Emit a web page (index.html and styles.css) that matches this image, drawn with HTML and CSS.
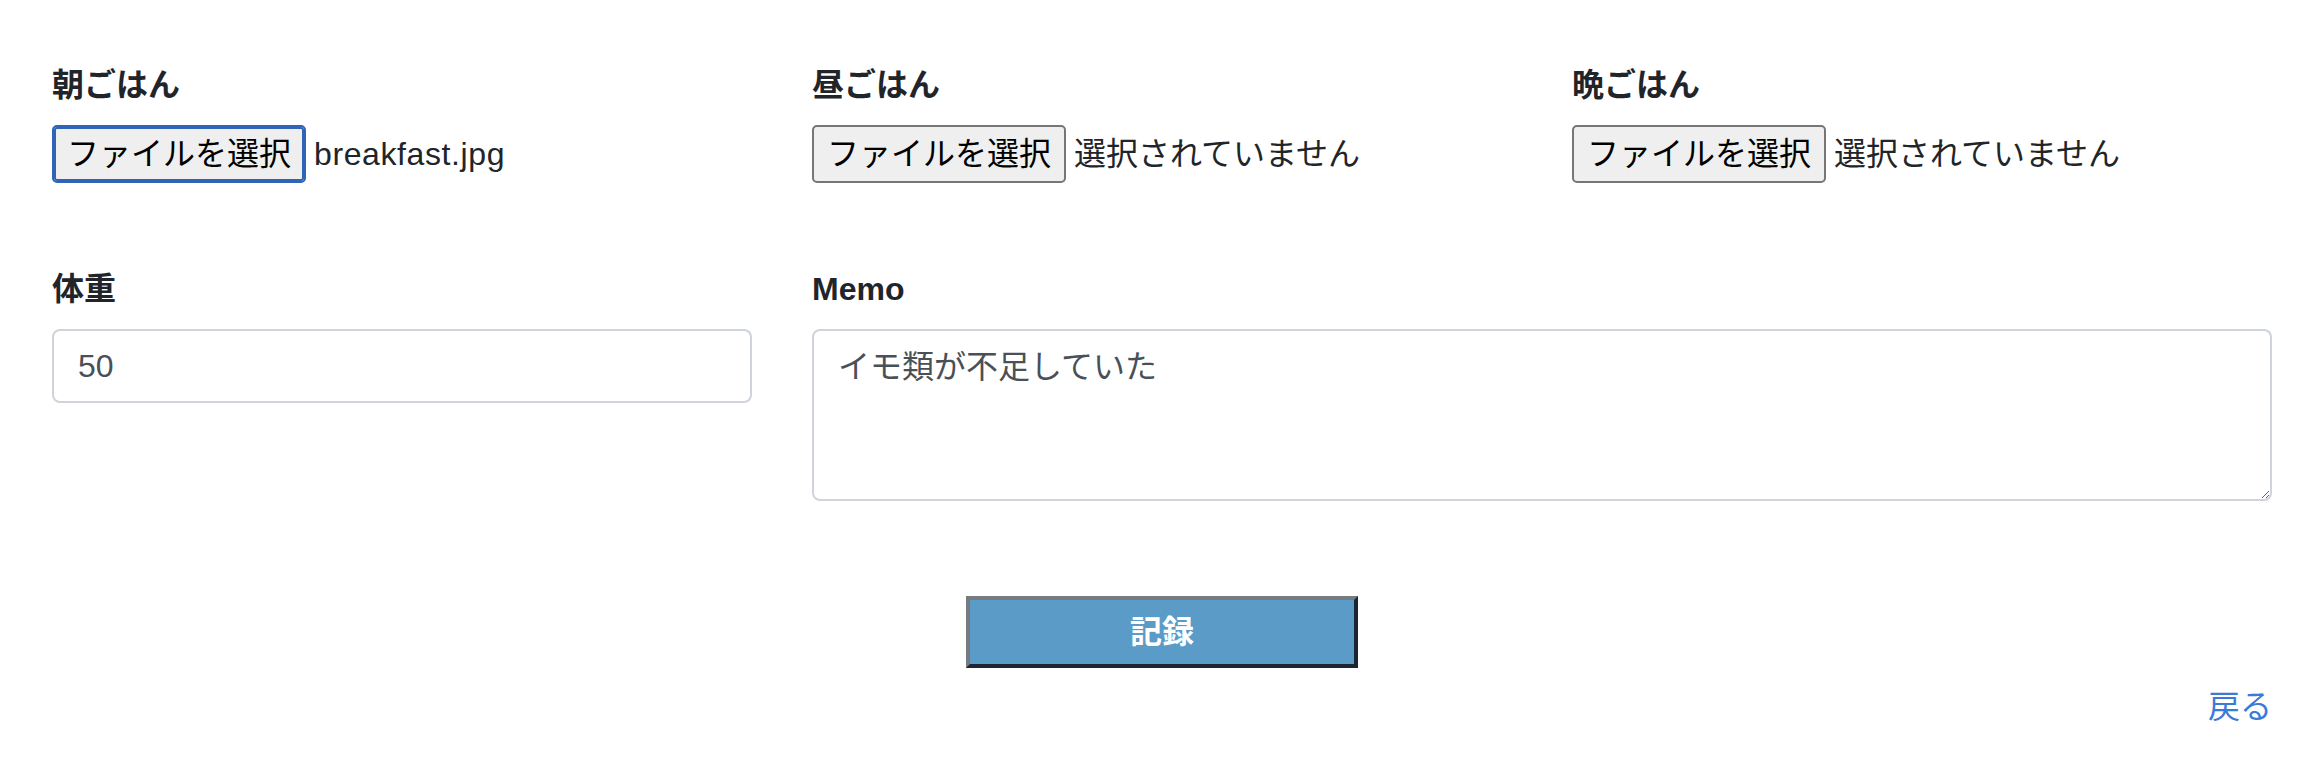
FILE: index.html
```html
<!DOCTYPE html>
<html lang="ja">
<head>
<meta charset="utf-8">
<title>記録</title>
<link rel="stylesheet" href="styles.css">
</head>
<body>
<div class="page">
  <form class="form" action="#">
    <div class="grid">
      <div class="group file-group">
        <label class="label">朝ごはん</label>
        <div class="file">
          <button type="button" class="file-btn is-focused">ファイルを選択</button>
          <span class="file-name is-chosen">breakfast.jpg</span>
        </div>
      </div>
      <div class="group file-group">
        <label class="label">昼ごはん</label>
        <div class="file">
          <button type="button" class="file-btn">ファイルを選択</button>
          <span class="file-name">選択されていません</span>
        </div>
      </div>
      <div class="group file-group">
        <label class="label">晩ごはん</label>
        <div class="file">
          <button type="button" class="file-btn">ファイルを選択</button>
          <span class="file-name">選択されていません</span>
        </div>
      </div>
      <div class="group">
        <label class="label" for="weight">体重</label>
        <input class="control" id="weight" type="text" value="50">
      </div>
      <div class="group span-2">
        <label class="label" for="memo">Memo</label>
        <textarea class="control memo" id="memo">イモ類が不足していた</textarea>
      </div>
    </div>
    <div class="actions">
      <button type="submit" class="submit">記録</button>
    </div>
    <div class="back">
      <a href="#" class="back-link">戻る</a>
    </div>
  </form>
</div>
</body>
</html>
```

FILE: styles.css
```css
html, body {
  margin: 0;
  padding: 0;
  background: #ffffff;
}

body {
  font-family: "Liberation Sans", "Noto Sans CJK JP", sans-serif;
  font-size: 32px;
  line-height: 48px;
  color: #212529;
}

.page {
  width: 2220px;
  padding: 61px 0 0 52px;
}

.grid {
  display: grid;
  grid-template-columns: repeat(3, 700px);
  column-gap: 60px;
}

.label {
  display: block;
  font-weight: 700;
  margin-bottom: 16px;
}

.file-group {
  margin-bottom: 82px;
}

.span-2 {
  grid-column: span 2;
}

.file {
  display: flex;
  align-items: center;
  gap: 8px;
}

.file-btn {
  height: 58px;
  padding: 0 13px;
  margin: 0;
  border: 2px solid #767676;
  border-radius: 5px;
  background: #efefef;
  font: inherit;
  line-height: 54px;
  color: #000000;
}

.file-btn.is-focused {
  border-color: #2f64b7;
  box-shadow: inset 0 0 0 2px #2f64b7;
}

.file-name {
  color: #212529;
  white-space: nowrap;
}

.file-name.is-chosen {
  letter-spacing: 0.6px;
}

.control {
  display: block;
  width: 100%;
  box-sizing: border-box;
  margin: 0;
  padding: 12px 24px;
  border: 2px solid #ced4da;
  border-radius: 8px;
  font: inherit;
  line-height: 46px;
  color: #495057;
  background: #ffffff;
}

input.control {
  height: 74px;
}

.memo {
  height: 172px;
  line-height: 48px;
  resize: vertical;
}

.actions {
  display: flex;
  justify-content: center;
  margin-top: 95px;
}

.submit {
  width: 392px;
  height: 72px;
  padding: 0;
  margin: 0;
  background: #5a9bc8;
  color: #ffffff;
  font: inherit;
  font-weight: 700;
  border: 4px solid;
  border-color: #757b81 #1b2631 #1b2631 #757b81;
}

.back {
  text-align: right;
  margin-top: 15px;
}

.back-link {
  color: #3b7bd8;
  text-decoration: none;
}
```
